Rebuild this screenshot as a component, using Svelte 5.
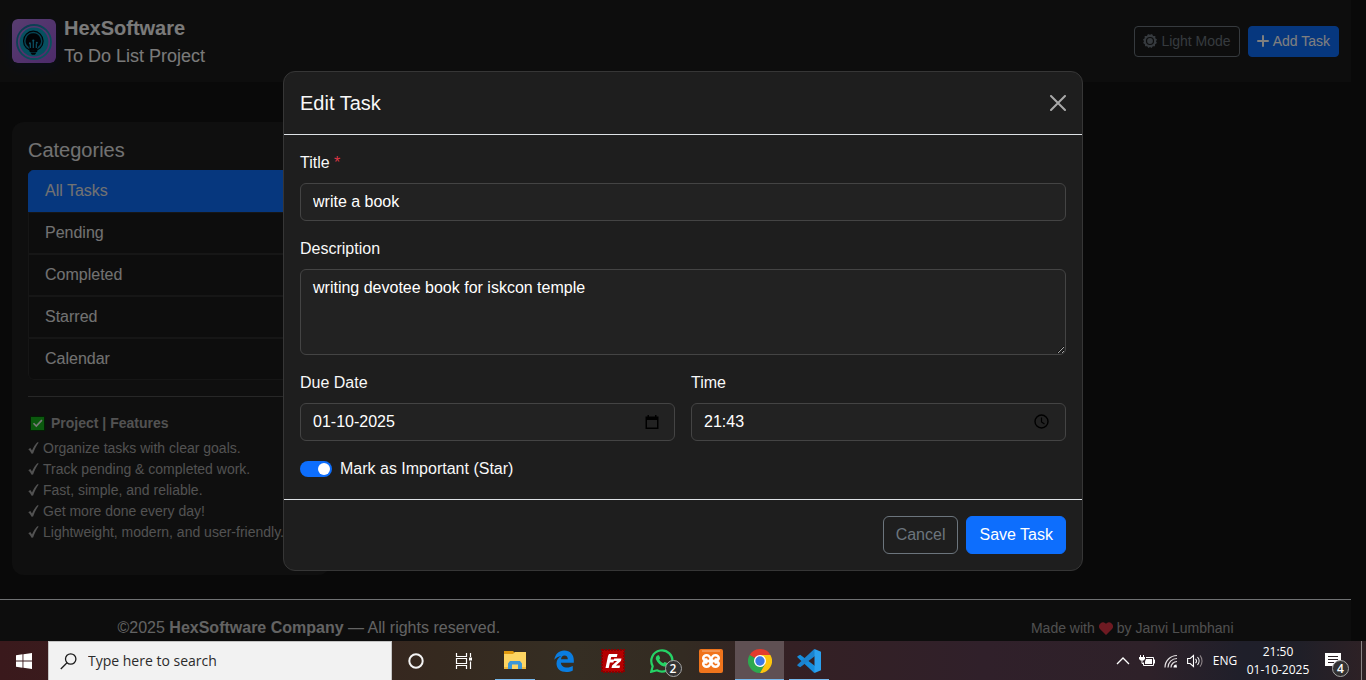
<script>
  const categories = ['All Tasks', 'Pending', 'Completed', 'Starred', 'Calendar'];
  const features = [
    'Organize tasks with clear goals.',
    'Track pending & completed work.',
    'Fast, simple, and reliable.',
    'Get more done every day!',
    'Lightweight, modern, and user-friendly.'
  ];
  let selected = $state('All Tasks');
  let title = $state('write a book');
  let description = $state('writing devotee book for iskcon temple');
  let dueDate = $state('01-10-2025');
  let dueTime = $state('21:43');
  let starred = $state(true);
</script>

<div class="screen">
  <div class="viewport">
    <div class="page">
      <header class="navbar">
        <div class="brand">
          <svg class="logo" viewBox="0 0 44 44" aria-hidden="true">
            <defs>
              <linearGradient id="logoBg" x1="0" y1="0" x2="1" y2="1">
                <stop offset="0" stop-color="#b07ae0" />
                <stop offset="1" stop-color="#9a56d6" />
              </linearGradient>
              <linearGradient id="ring" x1="0" y1="0" x2="1" y2="1">
                <stop offset="0" stop-color="#1c6fa0" />
                <stop offset="1" stop-color="#12b0c0" />
              </linearGradient>
            </defs>
            <rect width="44" height="44" rx="5" fill="url(#logoBg)" />
            <circle cx="22" cy="23" r="17" fill="none" stroke="url(#ring)" stroke-width="1.8" />
            <circle cx="22" cy="23" r="14.4" fill="#0ca0c0" />
            <circle cx="21.3" cy="22" r="9.8" fill="#0a86a6" stroke="#020a10" stroke-width="1.2" />
            <path d="M21.3 14.2a7.600 7.600 0 0 0-5 13.300l1.200 2.500h7.600l1.200-2.500a7.600 7.600 0 0 0-5-13.300z" fill="#03070c" />
            <path d="M18.300 29v-4.500M21.300 29v-7M24.300 29v-4.500" stroke="#18a4c8" stroke-width="1.200" />
            <circle cx="21.300" cy="21.600" r="1.100" fill="#18a4c8" />
            <circle cx="17.900" cy="24.200" r="1" fill="#18a4c8" />
            <circle cx="24.800" cy="23.800" r="1" fill="#18a4c8" />
            <path d="M17.300 30.600h8.200M17.600 32.400h7.600" stroke="#03070c" stroke-width="1.200" />
            <path d="M18.300 33.400h6.200l-1.600 2.400h-3z" fill="#03070c" />
          </svg>
          <div>
            <h1>HexSoftware</h1>
            <p>To Do List Project</p>
          </div>
        </div>
        <div class="actions">
          <button type="button" class="btn small outline">
            <svg width="14" height="14" viewBox="0 0 16 16" aria-hidden="true">
              <path fill="currentColor" fill-rule="evenodd" d="M8 .800L10.300 0l1.200 2.300 2.600.100-.100 2.500L16 6.300 14.800 8.300 15.900 10.400 13.800 11.600 13.600 14 11.200 13.900 9.800 16 8 14.800 6.200 16 4.800 13.900 2.400 14 2.200 11.600.100 10.400 1.200 8.300 0 6.300 2 4.900 1.900 2.400 4.500 2.300 5.700 0zM8 3.300a4.700 4.700 0 1 0 0 9.400 4.700 4.700 0 0 0 0-9.400z" />
              <circle cx="8" cy="8" r="3.300" fill="currentColor" />
            </svg>
            Light Mode
          </button>
          <button type="button" class="btn small primary">
            <svg width="12" height="12" viewBox="0 0 12 12" aria-hidden="true">
              <path d="M6 1v10M1 6h10" stroke="currentColor" stroke-width="2" stroke-linecap="round" />
            </svg>
            Add Task
          </button>
        </div>
      </header>

      <aside class="sidebar">
        <h2>Categories</h2>
        <nav class="categories">
          {#each categories as name}
            <button type="button" class:active={selected === name} onclick={() => (selected = name)}>{name}</button>
          {/each}
        </nav>
        <hr />
        <h3>
          <svg width="19" height="17" viewBox="0 0 19 17" aria-hidden="true">
            <rect x="2.500" y="1.500" width="14" height="14" fill="#17b31c" stroke="#063d08" />
            <path d="M5.500 8.300l2.800 2.800 5.600-6" fill="none" stroke="#f4f4f4" stroke-width="1.600" />
          </svg>
          Project | Features
        </h3>
        <ul>
          {#each features as feature}
            <li>
              <svg width="11" height="13" viewBox="0 0 11 13" aria-hidden="true">
                <path d="M.3 7.200l2-1.100L4 8.400C5.600 5 7.300 2.300 9.300.3l1.400.2C8.300 3.800 6.500 7.300 5.100 11.500L3.600 11.700C2.700 9.800 1.700 8.300.3 7.200z" fill="currentColor" />
              </svg>
              {feature}
            </li>
          {/each}
        </ul>
      </aside>

      <footer class="footer">
        <div class="container">
          <span>©2025 <strong>HexSoftware Company</strong> — All rights reserved.</span>
          <small>
            Made with
            <svg width="14" height="13" viewBox="0 0 14 13" aria-label="love">
              <path d="M7 13L1.200 7.200A3.900 3.900 0 0 1 7 1.800a3.900 3.900 0 0 1 5.800 5.400z" fill="#dc3545" />
            </svg>
            by Janvi Lumbhani
          </small>
        </div>
      </footer>
    </div>

    <div class="backdrop">
      <form class="modal" role="dialog" aria-labelledby="modalTitle" onsubmit={(e) => e.preventDefault()}>
        <div class="modal-header">
          <h2 id="modalTitle">Edit Task</h2>
          <button type="button" class="close" aria-label="Close">
            <svg width="16" height="16" viewBox="0 0 16 16" aria-hidden="true">
              <path d="M1 1l14 14M15 1L1 15" stroke="#a9a9a9" stroke-width="2" stroke-linecap="round" />
            </svg>
          </button>
        </div>

        <div class="modal-body">
          <div class="field">
            <label for="title">Title <span class="required">*</span></label>
            <input id="title" type="text" bind:value={title} />
          </div>
          <div class="field">
            <label for="description">Description</label>
            <textarea id="description" rows="3" bind:value={description}></textarea>
          </div>
          <div class="columns">
            <div class="field">
              <label for="date">Due Date</label>
              <div class="picker">
                <input id="date" type="text" bind:value={dueDate} />
                <button type="button" aria-label="Choose date">
                  <svg width="14" height="14" viewBox="0 0 14 14" aria-hidden="true">
                    <path d="M2.500 0H4v1.500h6V0h1.500v1.500H13.500V14H.5V1.500h2zM2 5v7.500h10V5z" fill="#000" fill-rule="evenodd" />
                  </svg>
                </button>
              </div>
            </div>
            <div class="field">
              <label for="time">Time</label>
              <div class="picker">
                <input id="time" type="text" bind:value={dueTime} />
                <button type="button" aria-label="Choose time">
                  <svg width="16" height="16" viewBox="0 0 16 16" aria-hidden="true">
                    <circle cx="7.500" cy="7.500" r="6.500" fill="none" stroke="#000" stroke-width="1.400" />
                    <path d="M7.500 3.500V8l3 2" fill="none" stroke="#000" stroke-width="1.200" />
                  </svg>
                </button>
              </div>
            </div>
          </div>
          <label class="switch">
            <input type="checkbox" bind:checked={starred} />
            Mark as Important (Star)
          </label>
        </div>

        <div class="modal-footer">
          <button type="button" class="btn outline">Cancel</button>
          <button type="submit" class="btn primary">Save Task</button>
        </div>
      </form>
    </div>
  </div>

  <div class="taskbar">
    <button type="button" class="start" aria-label="Start">
      <svg width="16" height="16" viewBox="0 0 16 16" aria-hidden="true">
        <path d="M0 2.200L6.500 1.300V7.500H0zM7.400 1.200L16 0v7.500H7.400zM0 8.500h6.500v6.200L0 13.800zM7.400 8.500H16V16l-8.600-1.200z" fill="#fff" />
      </svg>
    </button>
    <label class="search">
      <svg width="17" height="17" viewBox="0 0 17 17" aria-hidden="true">
        <circle cx="10.700" cy="6" r="5.200" fill="none" stroke="#1c1c1c" stroke-width="1.300" />
        <path d="M7 9.800L.8 16" stroke="#1c1c1c" stroke-width="1.300" />
      </svg>
      <input type="text" placeholder="Type here to search" aria-label="Search" />
    </label>

    <div class="shell-apps">
      <button type="button" class="app" aria-label="Cortana">
        <svg width="16" height="16" viewBox="0 0 16 16"><circle cx="8" cy="8" r="6.700" fill="none" stroke="#f4f4f4" stroke-width="2" /></svg>
      </button>
      <button type="button" class="app" aria-label="Task View">
        <svg width="18" height="16" viewBox="0 0 18 16">
          <path d="M1.500 0v3.500h10V0M1.500 16v-3.500h10V16M1.500 5.500h10v5h-10zM15.500 0v4M15.500 8.500V16" fill="none" stroke="#fff" stroke-width="1.200" />
          <rect x="14" y="4.500" width="3" height="3" fill="#fff" />
        </svg>
      </button>
    </div>
    <button type="button" class="app open" aria-label="File Explorer">
      <svg width="22" height="19" viewBox="0 0 22 19">
        <path d="M0 0h9l1.500 1.500V4H0z" fill="#e09a10" />
        <path d="M0 3h9l2-2h11v17H0z" fill="#fcd462" />
        <path d="M4 18v-5.500L6 10h10l2 2.500V18h-4v-4.500H8V18z" fill="#3c97d8" />
        <path d="M0 16h4v2H0zM18 16h4v2h-4z" fill="#edb83c" />
      </svg>
    </button>
    <button type="button" class="app" aria-label="Edge">
      <svg width="20" height="22" viewBox="0 0 20 22">
        <path d="M.3 9.800C1.200 4 4.900.5 10.200.5c6 0 9.600 4.200 9.600 9.600v2.700H6.900c.2 3.200 2.900 4.800 6.200 4.800 2.100 0 4.100-.6 5.700-1.500v4.300c-1.900 1-4.200 1.500-6.500 1.500C6.300 21.900 2.500 18.400 2.500 13.400c0-3.400 1.900-6 4.900-7.500-3.200.5-5.400 1.800-7.100 3.900zM7 9.300h6.800c0-2.200-1.100-3.700-3.300-3.700C8.500 5.600 7.300 7 7 9.300z" fill="#0a7de0" />
      </svg>
    </button>
    <button type="button" class="app" aria-label="FileZilla">
      <svg width="24" height="24" viewBox="0 0 24 24">
        <rect x="1" y="1" width="22" height="22" fill="#b40000" stroke="#8a0000" stroke-width="2" stroke-dasharray="2 1" />
        <path d="M8 5h8.500l-.7 3H10.200l-.6 2.500h3.600l-.8 3H8.900L7.700 19H4.500L7 7zM13.200 9.500h7.300l-.6 2.600-5 4.400h4.200L18.500 19h-8l.6-2.500 5-4.400h-3.500z" fill="#fff" />
      </svg>
    </button>
    <button type="button" class="app" aria-label="WhatsApp">
      <span class="badged">
        <svg width="24" height="24" viewBox="0 0 24 24">
          <path d="M1.200 22.800l1.500-5.600A10.600 10.600 0 1 1 6.900 21.300z" fill="none" stroke="#25d366" stroke-width="2.200" />
          <path d="M8.200 6.200c.5 0 .9.100 1.100.7l.8 2c.1.500-.4 1-.9 1.600.9 1.700 2.200 2.900 4.200 3.700.6-.7 1-1.400 1.500-1.200l2.200 1.100c.6.300.5 1.300.1 2.100-.6 1-2 1.600-3.300 1.300-3.900-1-6.500-3.500-7.900-6.900-.6-1.700.4-4.300 2.200-4.400z" fill="#25d366" />
        </svg>
        <span class="badge">2</span>
      </span>
    </button>
    <button type="button" class="app" aria-label="XAMPP">
      <svg width="24" height="24" viewBox="0 0 24 24">
        <rect width="24" height="24" rx="2" fill="#f0741c" />
        <path d="M3 2h18" stroke="#f8b483" stroke-width="1" />
        <path d="M7.600 5C10 5 11 6.200 12 7.800 13 6.200 14 5 16.400 5c2.600 0 4.600 1.700 4.600 4 0 1.300-.6 2.300-1.600 3 1 .7 1.600 1.700 1.600 3 0 2.300-2 4-4.600 4-2.400 0-3.400-1.200-4.400-2.800-1 1.600-2 2.800-4.400 2.800C5 19 3 17.300 3 15c0-1.300.6-2.300 1.600-3C3.600 11.300 3 10.300 3 9c0-2.300 2-4 4.600-4z" fill="#fff" />
        <path d="M6.300 9.200c0-1 2.300-1.200 2.700 0l.7 1.300M6.300 14.800c0 1 2.300 1.200 2.700 0l.7-1.300M17.700 9.200c0-1-2.300-1.200-2.700 0l-.7 1.300M17.700 14.800c0 1-2.300 1.200-2.700 0l-.7-1.300" fill="none" stroke="#f0741c" stroke-width="1.700" />
      </svg>
    </button>
    <button type="button" class="app open current" aria-label="Chrome">
      <svg width="24" height="24" viewBox="0 0 24 24">
        <path d="M12 12L1.600 6A12 12 0 0 1 22.400 6z" fill="#e33b2e" />
        <path d="M12 12L1.600 6A12 12 0 0 0 12 24l5.200-9z" fill="#2da94f" />
        <path d="M12 12V6h10.400A12 12 0 0 1 12 24l5.200-9z" fill="#fdc50e" />
        <circle cx="12" cy="12" r="6" fill="#fff" />
        <circle cx="12" cy="12" r="4.700" fill="#3b78e7" />
      </svg>
    </button>
    <button type="button" class="app open" aria-label="Visual Studio Code">
      <svg width="24" height="24" viewBox="0 0 24 24">
        <path d="M3.200 5.800L18 17v6.500l-1 .3L.4 8.300v-1z" fill="#168ede" />
        <path d="M3.200 18.200L18 7V.5l-1-.3L.4 15.700v1z" fill="#1b83cf" />
        <path d="M17.500 0L24 2.800v18.400L17.500 24z" fill="#2ba0ee" />
      </svg>
    </button>

    <div class="tray">
      <button type="button" class="tray-icon" aria-label="Show hidden icons">
        <svg width="14" height="8" viewBox="0 0 14 8"><path d="M1 7l6-6 6 6" fill="none" stroke="#fff" stroke-width="1.300" /></svg>
      </button>
      <button type="button" class="tray-icon" aria-label="Battery">
        <svg width="16" height="14" viewBox="0 0 16 14">
          <path d="M1.500 1v2M4.500 1v2M3 6v3.500h2" stroke="#fff" fill="none" />
          <path d="M0 3h6v2L4.500 6.500h-3L0 5z" fill="#fff" />
          <path d="M7 3.500h7.500v8H4.500V8.500M15.500 5.500v4" fill="none" stroke="#fff" />
          <path d="M7 5h6v5H6V7.500z" fill="#fff" />
        </svg>
      </button>
      <button type="button" class="tray-icon" aria-label="Network">
        <svg width="14" height="14" viewBox="0 0 14 14">
          <g fill="none" stroke="#e4e0e2" stroke-width="1.200">
            <path d="M1 13.500A12 12 0 0 1 13 1.500M4 13.500a9 9 0 0 1 9-9M7 13.500a6 6 0 0 1 6-6" />
          </g>
          <path d="M9.500 13.500a3 3 0 0 1 3-3l.5 3z" fill="#fff" />
        </svg>
      </button>
      <button type="button" class="tray-icon" aria-label="Volume">
        <svg width="16" height="14" viewBox="0 0 16 14">
          <path d="M.6 4.500h2.600L6.500 1.500v11L3.200 9.500H.6z" fill="none" stroke="#fff" stroke-width="1.100" />
          <path d="M8.500 4.800a3 3 0 0 1 0 4.400M10.500 3a6 6 0 0 1 0 8" fill="none" stroke="#fff" stroke-width="1.100" />
          <path d="M13 1.300a9 9 0 0 1 0 11.400" fill="none" stroke="#8d8488" stroke-width="1.100" />
        </svg>
      </button>
      <span class="lang">ENG</span>
      <div class="clock"><span>21:50</span><span>01-10-2025</span></div>
      <button type="button" class="notices" aria-label="Notifications">
        <span class="badged">
          <svg width="24" height="24" viewBox="0 0 24 24">
            <path d="M0 4h16v13H11v3.500L7 17H0z" fill="#fff" />
            <path d="M3 7.500h10M3 10.500h10M3 13.500h6" stroke="#2a2024" />
          </svg>
          <span class="badge">4</span>
        </span>
      </button>
      <button type="button" class="peek" aria-label="Show desktop"></button>
    </div>
  </div>
</div>

<style>
  :global(body) {
    margin: 0;
    background: #121212;
  }
  .screen,
  .screen :global(*) {
    box-sizing: border-box;
  }
  .screen {
    display: grid;
    grid-template-rows: minmax(0, 1fr) auto;
    height: 100vh;
    overflow: hidden;
    font-family: 'Liberation Sans', Arial, sans-serif;
    font-size: 16px;
    line-height: 24px;
    color: #e4e4e4;
  }
  h1, h2, h3, p, ul {
    margin: 0;
    padding: 0;
  }
  button, input, textarea {
    font: inherit;
    color: inherit;
  }
  button {
    padding: 0;
    border: 0;
    background: none;
  }
  svg {
    flex: none;
  }
  .viewport {
    position: relative;
    overflow: hidden;
    background: #121212;
  }
  .page {
    padding-right: 15px;
  }

  .navbar {
    display: flex;
    justify-content: space-between;
    align-items: center;
    padding: 13px 12px;
    background: #1b1b1b;
  }
  .brand {
    display: flex;
    align-items: center;
    gap: 8px;
  }
  .logo {
    width: 44px;
    height: 44px;
    border-radius: 6px;
    box-shadow: 0 4px 12px rgba(13, 40, 110, 0.3);
  }
  .brand h1 {
    font-size: 20px;
    line-height: 30px;
    color: #f4f4f4;
  }
  .brand p {
    font-size: 18px;
    line-height: 26px;
    color: #f4f4f4;
  }
  .actions {
    display: flex;
    gap: 8px;
  }
  .btn {
    display: flex;
    align-items: center;
    gap: 4px;
    padding: 6px 12px;
    border: 1px solid transparent;
    border-radius: 6px;
  }
  .btn.small {
    padding: 4px 8px;
    border-radius: 4px;
    font-size: 14px;
    line-height: 21px;
  }
  .btn.outline {
    border-color: #6c757d;
    color: #6c757d;
  }
  .btn.primary {
    background: #0d6efd;
    border-color: #0d6efd;
    color: #fff;
  }

  .sidebar {
    width: 318px;
    margin: 40px 12px 24px;
    padding: 16px;
    border-radius: 12px;
    background: #1e1e1e;
  }
  .sidebar h2 {
    margin-bottom: 8px;
    font-size: 20px;
    line-height: 24px;
    font-weight: 400;
  }
  .categories {
    display: flex;
    flex-direction: column;
    border-radius: 6px;
    overflow: hidden;
  }
  .categories button {
    padding: 8px 16px;
    border: 1px solid #2c2c2c;
    background: #1a1a1a;
    text-align: left;
  }
  .categories button:last-child {
    border-radius: 0 0 6px 6px;
  }
  .categories button.active {
    background: #0d6efd;
    border-color: #0d6efd;
  }
  .sidebar hr {
    margin: 16px 0;
    border: 0;
    border-top: 1px solid #4e4e4e;
  }
  .sidebar h3,
  .sidebar li {
    display: flex;
    align-items: center;
    gap: 4px;
    font-size: 14px;
    line-height: 21px;
    white-space: nowrap;
    color: #a4a4a4;
  }
  .sidebar h3 {
    margin-bottom: 4px;
  }
  .sidebar ul {
    margin-bottom: 16px;
    list-style: none;
  }

  .footer {
    padding: 16px 0;
    border-top: 1px solid #dee2e6;
    background: #1b1b1b;
    color: #c6c6c6;
  }
  .container {
    display: flex;
    justify-content: space-between;
    align-items: center;
    max-width: 1140px;
    margin: 0 auto;
    padding: 0 12px;
  }
  .container small {
    display: flex;
    align-items: center;
    gap: 4px;
    font-size: 14px;
    color: #a0a0a0;
  }

  .backdrop {
    position: absolute;
    inset: 0;
    display: flex;
    align-items: center;
    justify-content: center;
    background: rgba(0, 0, 0, 0.5);
  }
  .modal {
    width: 100%;
    max-width: 800px;
    border: 1px solid #363636;
    border-radius: 12px;
    background: #1e1e1e;
    color: #f8f8f8;
  }
  .modal-header {
    display: flex;
    align-items: center;
    justify-content: space-between;
    padding: 16px;
    border-bottom: 1px solid #dee2e6;
  }
  .modal-header h2 {
    font-size: 20px;
    line-height: 30px;
    font-weight: 400;
  }
  .close {
    display: flex;
  }
  .modal-body {
    padding: 16px 16px 18px;
  }
  .field {
    display: flex;
    flex-direction: column;
    gap: 8px;
    margin-bottom: 16px;
  }
  .required {
    color: #dc3545;
  }
  .field input,
  .field textarea {
    display: block;
    width: 100%;
    padding: 6px 12px;
    border: 1px solid #444;
    border-radius: 6px;
    background: #222;
    color: #fff;
    outline: 0;
  }
  .field input {
    height: 38px;
  }
  .field textarea {
    height: 86px;
    resize: vertical;
  }
  .columns {
    display: grid;
    grid-template-columns: 1fr 1fr;
    gap: 16px;
  }
  .picker {
    position: relative;
  }
  .picker button {
    position: absolute;
    top: 0;
    bottom: 0;
    right: 16px;
    display: flex;
    align-items: center;
  }
  .switch {
    display: flex;
    align-items: center;
    gap: 8px;
  }
  .switch input {
    appearance: none;
    display: flex;
    width: 32px;
    height: 16px;
    margin: 0;
    padding: 2px;
    border-radius: 8px;
    background: #555;
  }
  .switch input::before {
    content: '';
    width: 12px;
    height: 12px;
    border-radius: 50%;
    background: #fff;
  }
  .switch input:checked {
    justify-content: flex-end;
    background: #0d6efd;
  }
  .modal-footer {
    display: flex;
    justify-content: flex-end;
    gap: 8px;
    padding: 16px;
    border-top: 1px solid #dee2e6;
  }

  .taskbar {
    display: flex;
    height: 39px;
    font-family: 'Open Sans', 'Noto Sans', sans-serif;
    background: linear-gradient(90deg, #3a191c 0%, #38211f 18%, #35291f 32%, #352e23 42%, #332b22 50%, #342024 58%, #30202a 72%, #2e2129 84%, #1f1f2a 91%, #1f1f28 95%, #2e2125 100%);
    color: #fff;
  }
  .taskbar button {
    display: flex;
    align-items: center;
    justify-content: center;
  }
  .start {
    width: 48px;
  }
  .search {
    display: flex;
    align-items: center;
    gap: 11px;
    width: 344px;
    padding: 0 11px;
    border: 1px solid #c4c4c4;
    border-bottom: 0;
    background: #f2f2f2;
    color: #222;
  }
  .search input {
    flex: 1;
    min-width: 0;
    padding: 0;
    border: 0;
    outline: 0;
    background: none;
    font-size: 14px;
  }
  .search input::placeholder {
    color: #2b2b2b;
    opacity: 1;
  }
  .shell-apps {
    display: flex;
    margin-right: 2px;
  }
  .app {
    width: 49px;
  }
  .shell-apps .app {
    width: 48px;
  }
  .app.open {
    background: linear-gradient(#76b9ed, #76b9ed) bottom / 40px 1px no-repeat;
  }
  .app.open.current {
    background: linear-gradient(#76b9ed, #76b9ed) bottom / 100% 1px no-repeat, #5f5053;
  }
  .badged {
    position: relative;
    display: flex;
  }
  .badge {
    position: absolute;
    right: -8px;
    bottom: -4px;
    width: 17px;
    height: 17px;
    border: 1px solid #a5a5a5;
    border-radius: 50%;
    background: #333232;
    font-size: 12px;
    line-height: 15px;
    font-weight: 600;
    text-align: center;
  }
  .notices .badge {
    right: 0;
  }
  .tray {
    display: flex;
    align-items: center;
    margin-left: auto;
    font-size: 12px;
  }
  .tray button {
    height: 100%;
  }
  .tray-icon {
    width: 24px;
  }
  .lang {
    width: 36px;
    text-align: center;
  }
  .clock {
    display: flex;
    flex-direction: column;
    width: 70px;
    line-height: 18px;
    text-align: center;
  }
  .notices {
    width: 48px;
  }
  .tray .peek {
    width: 5px;
    border-left: 1px solid #8a8486;
  }
</style>
